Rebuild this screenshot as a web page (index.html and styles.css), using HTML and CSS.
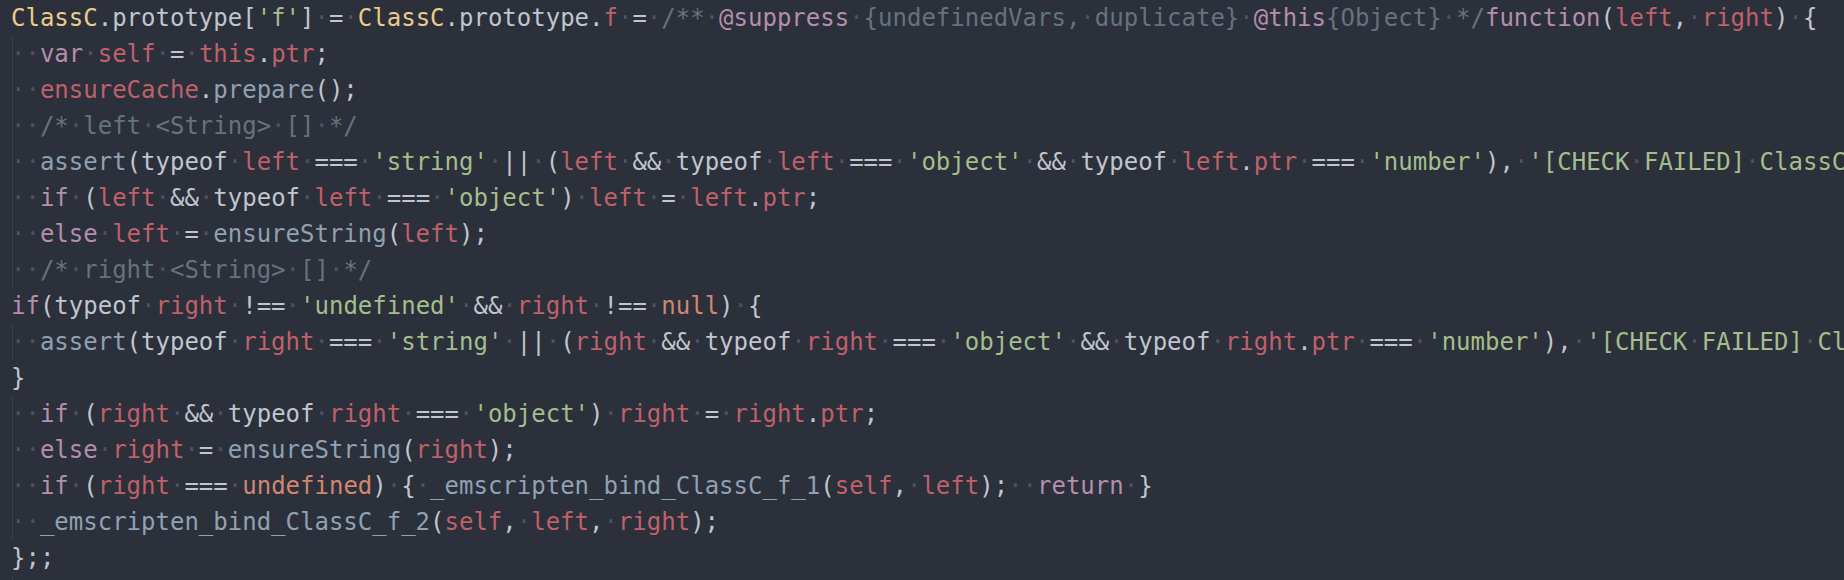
FILE: index.html
```html
<!DOCTYPE html>
<html>
<head>
<meta charset="utf-8">
<link rel="stylesheet" href="styles.css">
</head>
<body>
<div class="code">
<div class="ln"><span class="y">ClassC</span>.prototype[<span class="s">'f'</span>]<span class="w">·</span>=<span class="w">·</span><span class="y">ClassC</span>.prototype.<span class="v">f</span><span class="w">·</span>=<span class="w">·</span><span class="c">/**<span class="w">·</span><span class="k">@suppress</span><span class="w">·</span>{undefinedVars,<span class="w">·</span>duplicate}<span class="w">·</span><span class="k">@this</span>{Object}<span class="w">·</span>*/</span><span class="k">function</span>(<span class="v">left</span>,<span class="w">·</span><span class="v">right</span>)<span class="w">·</span>{</div>
<div class="ln g"><span class="w">··</span><span class="k">var</span><span class="w">·</span><span class="v">self</span><span class="w">·</span>=<span class="w">·</span><span class="v">this</span>.<span class="v">ptr</span>;</div>
<div class="ln g"><span class="w">··</span><span class="v">ensureCache</span>.<span class="f">prepare</span>();</div>
<div class="ln g"><span class="w">··</span><span class="c">/*<span class="w">·</span>left<span class="w">·</span>&lt;String&gt;<span class="w">·</span>[]<span class="w">·</span>*/</span></div>
<div class="ln g"><span class="w">··</span><span class="f">assert</span>(typeof<span class="w">·</span><span class="v">left</span><span class="w">·</span>===<span class="w">·</span><span class="s">'string'</span><span class="w">·</span>||<span class="w">·</span>(<span class="v">left</span><span class="w">·</span>&amp;&amp;<span class="w">·</span>typeof<span class="w">·</span><span class="v">left</span><span class="w">·</span>===<span class="w">·</span><span class="s">'object'</span><span class="w">·</span>&amp;&amp;<span class="w">·</span>typeof<span class="w">·</span><span class="v">left</span>.<span class="v">ptr</span><span class="w">·</span>===<span class="w">·</span><span class="s">'number'</span>),<span class="w">·</span><span class="s">'[CHECK<span class="w">·</span>FAILED]<span class="w">·</span>ClassC::f:<span class="w">·</span>Expecting<span class="w">·</span>&lt;String&gt;'</span>);</div>
<div class="ln g"><span class="w">··</span><span class="k">if</span><span class="w">·</span>(<span class="v">left</span><span class="w">·</span>&amp;&amp;<span class="w">·</span>typeof<span class="w">·</span><span class="v">left</span><span class="w">·</span>===<span class="w">·</span><span class="s">'object'</span>)<span class="w">·</span><span class="v">left</span><span class="w">·</span>=<span class="w">·</span><span class="v">left</span>.<span class="v">ptr</span>;</div>
<div class="ln g"><span class="w">··</span><span class="k">else</span><span class="w">·</span><span class="v">left</span><span class="w">·</span>=<span class="w">·</span><span class="f">ensureString</span>(<span class="v">left</span>);</div>
<div class="ln g"><span class="w">··</span><span class="c">/*<span class="w">·</span>right<span class="w">·</span>&lt;String&gt;<span class="w">·</span>[]<span class="w">·</span>*/</span></div>
<div class="ln"><span class="k">if</span>(typeof<span class="w">·</span><span class="v">right</span><span class="w">·</span>!==<span class="w">·</span><span class="s">'undefined'</span><span class="w">·</span>&amp;&amp;<span class="w">·</span><span class="v">right</span><span class="w">·</span>!==<span class="w">·</span><span class="o">null</span>)<span class="w">·</span>{</div>
<div class="ln g"><span class="w">··</span><span class="f">assert</span>(typeof<span class="w">·</span><span class="v">right</span><span class="w">·</span>===<span class="w">·</span><span class="s">'string'</span><span class="w">·</span>||<span class="w">·</span>(<span class="v">right</span><span class="w">·</span>&amp;&amp;<span class="w">·</span>typeof<span class="w">·</span><span class="v">right</span><span class="w">·</span>===<span class="w">·</span><span class="s">'object'</span><span class="w">·</span>&amp;&amp;<span class="w">·</span>typeof<span class="w">·</span><span class="v">right</span>.<span class="v">ptr</span><span class="w">·</span>===<span class="w">·</span><span class="s">'number'</span>),<span class="w">·</span><span class="s">'[CHECK<span class="w">·</span>FAILED]<span class="w">·</span>ClassC::f:<span class="w">·</span>Expecting<span class="w">·</span>&lt;String&gt;'</span>);</div>
<div class="ln">}</div>
<div class="ln g"><span class="w">··</span><span class="k">if</span><span class="w">·</span>(<span class="v">right</span><span class="w">·</span>&amp;&amp;<span class="w">·</span>typeof<span class="w">·</span><span class="v">right</span><span class="w">·</span>===<span class="w">·</span><span class="s">'object'</span>)<span class="w">·</span><span class="v">right</span><span class="w">·</span>=<span class="w">·</span><span class="v">right</span>.<span class="v">ptr</span>;</div>
<div class="ln g"><span class="w">··</span><span class="k">else</span><span class="w">·</span><span class="v">right</span><span class="w">·</span>=<span class="w">·</span><span class="f">ensureString</span>(<span class="v">right</span>);</div>
<div class="ln g"><span class="w">··</span><span class="k">if</span><span class="w">·</span>(<span class="v">right</span><span class="w">·</span>===<span class="w">·</span><span class="o">undefined</span>)<span class="w">·</span>{<span class="w">·</span><span class="f">_emscripten_bind_ClassC_f_1</span>(<span class="v">self</span>,<span class="w">·</span><span class="v">left</span>);<span class="w">··</span><span class="k">return</span><span class="w">·</span>}</div>
<div class="ln g"><span class="w">··</span><span class="f">_emscripten_bind_ClassC_f_2</span>(<span class="v">self</span>,<span class="w">·</span><span class="v">left</span>,<span class="w">·</span><span class="v">right</span>);</div>
<div class="ln">};;</div>
<div class="ln g"></div>
</div>
</body>
</html>
```
FILE: styles.css
```css
html, body {
  margin: 0;
  padding: 0;
  background: #2b303b;
  overflow: hidden;
}
.code {
  padding: 0 0 0 11px;
  font-family: "DejaVu Sans Mono", "Liberation Mono", monospace;
  font-size: 24px;
  line-height: 36px;
  color: #c0c5ce;
}
.ln {
  height: 36px;
  white-space: pre;
}
.ln.g {
  background-image: linear-gradient(#3a414d, #3a414d);
  background-repeat: no-repeat;
  background-size: 1px 100%;
  background-position: 1px 0;
}
.w { color: #4a5361; }
.y { color: #ebcb8b; }
.v { color: #bf616a; }
.s { color: #a3be8c; }
.k { color: #b48ead; }
.f { color: #8fa1b3; }
.o { color: #d08770; }
.c { color: #65737e; }
.c .k { color: #b48ead; }
```
